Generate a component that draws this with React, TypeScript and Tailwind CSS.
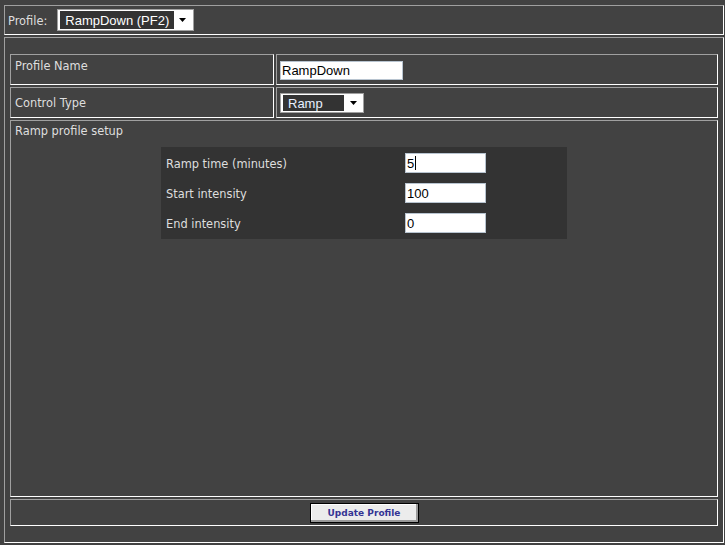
import React from "react";

const bevel =
  "border border-t-[#a0a0a0] border-l-[#a0a0a0] border-r-white border-b-white";

function Arrow() {
  return (
    <svg width="7" height="4" viewBox="0 0 7 4" className="shrink-0">
      <path d="M0 0h7L3.5 4z" fill="#000" />
    </svg>
  );
}

function Field({ value, caret }: { value: string; caret?: boolean }) {
  return (
    <div className="w-[81px] h-[20px] bg-white border border-[#b8c4d0] flex items-center pl-[1px] text-[13px] text-black leading-none font-['Liberation_Sans',Arial,sans-serif]">
      {value}
      {caret && <span className="w-px h-[14px] bg-black ml-[1px]" />}
    </div>
  );
}

export default function App() {
  const rows = [
    { label: "Ramp time (minutes)", value: "5", caret: true },
    { label: "Start intensity", value: "100" },
    { label: "End intensity", value: "0" },
  ];

  return (
    <div className="w-[725px] h-[545px] bg-[#424242] pt-[5px] pl-[4px] text-[#dedede] text-[11.4px] font-['DejaVu_Sans',Verdana,sans-serif] overflow-hidden">
      {/* profile picker */}
      <div className={`${bevel} w-[720px] h-[30px] flex items-center pl-[3px]`}>
        <span className="mt-[4px]">Profile:</span>
        <div className="ml-[10px] w-[137px] h-[22px] bg-white border border-[#a0a0a0] flex items-center pl-[2px] pr-[5px]">
          <div className="w-[114px] h-[18px] bg-[#333] text-white text-[13px] leading-none flex items-center pl-[5px] font-['Liberation_Sans',Arial,sans-serif]">
            RampDown (PF2)
          </div>
          <div className="flex-1 flex justify-end pr-[2px]">
            <Arrow />
          </div>
        </div>
      </div>

      <div className={`${bevel} mt-[2px] w-[720px] h-[506px] pt-[16px] pl-[5px] pr-[5px] flex flex-col gap-[2px]`}>
        <div className="flex gap-[2px] h-[31px]">
          <div className={`${bevel} w-[264px] pl-[4px] pt-[3px]`}>Profile Name</div>
          <div className={`${bevel} flex-1 pl-[3px] pt-[6px]`}>
            <div className="w-[123px] h-[19px] bg-white border border-[#b8c4d0] flex items-center pl-[1px] text-[13px] text-black leading-none font-['Liberation_Sans',Arial,sans-serif]">
              RampDown
            </div>
          </div>
        </div>

        <div className="flex gap-[2px] h-[31px]">
          <div className={`${bevel} w-[264px] pl-[4px] pt-[7px]`}>Control Type</div>
          <div className={`${bevel} flex-1 pl-[3px] pt-[5px]`}>
            <div className="w-[84px] h-[20px] bg-white border border-[#a0a0a0] flex items-center pl-[2px]">
              <div className="w-[61px] h-[16px] bg-[#333] text-[#e8f0ff] text-[13px] leading-none flex items-center pl-[5px] font-['Liberation_Sans',Arial,sans-serif]">
                Ramp
              </div>
              <div className="flex-1 flex justify-center">
                <Arrow />
              </div>
            </div>
          </div>
        </div>

        <div className={`${bevel} h-[377px] flex flex-col`}>
          <div className="pl-[4px] pt-[2px] h-[26px]">Ramp profile setup</div>
          <div className="self-center w-[406px] h-[92px] bg-[#333] pt-[6px] pl-[5px] flex flex-col gap-[10px]">
            {rows.map((r) => (
              <div key={r.label} className="flex items-center h-[20px]">
                <span className="w-[239px] mt-[4px]">{r.label}</span>
                <Field value={r.value} caret={r.caret} />
              </div>
            ))}
          </div>
        </div>

        <div className={`${bevel} h-[27px] flex justify-center pt-[3px]`}>
          <button className="w-[109px] h-[20px] bg-[#ececec] border border-black shadow-[inset_-2px_-2px_#9a9a9a,inset_1px_1px_#ffffff] text-[#343494] text-[9px] font-bold leading-none font-['DejaVu_Sans',Verdana,sans-serif]">
            Update Profile
          </button>
        </div>
      </div>
    </div>
  );
}
